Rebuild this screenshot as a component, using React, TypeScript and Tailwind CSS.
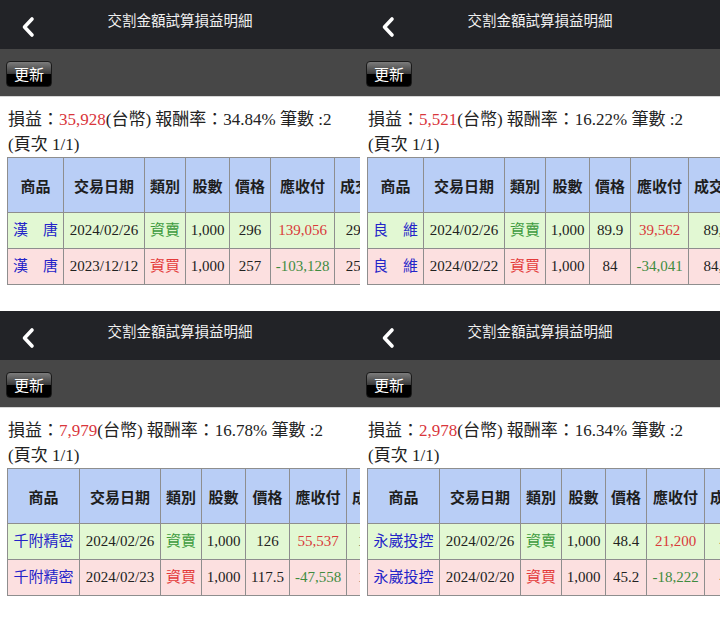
import React from "react";

type Row = {
  name: string;
  date: string;
  side: "資賣" | "資買";
  qty: string;
  price: string;
  amount: string;
  total: string;
  fee: string;
};

type Panel = {
  profit: string;
  rate: string;
  widths: string[];
  rows: Row[];
};

const PANELS: Panel[] = [
  {
    profit: "35,928",
    rate: "34.84%",
    widths: ["w-[56px]", "w-[81px]", "w-[41px]", "w-[44px]", "w-[41px]", "w-[64px]"],
    rows: [
      { name: "漢　唐", date: "2024/02/26", side: "資賣", qty: "1,000", price: "296", amount: "139,056", total: "296,000", fee: "421" },
      { name: "漢　唐", date: "2023/12/12", side: "資買", qty: "1,000", price: "257", amount: "-103,128", total: "257,000", fee: "366" },
    ],
  },
  {
    profit: "5,521",
    rate: "16.22%",
    widths: ["w-[56px]", "w-[81px]", "w-[41px]", "w-[44px]", "w-[41px]", "w-[58px]"],
    rows: [
      { name: "良　維", date: "2024/02/26", side: "資賣", qty: "1,000", price: "89.9", amount: "39,562", total: "89,900", fee: "128" },
      { name: "良　維", date: "2024/02/22", side: "資買", qty: "1,000", price: "84", amount: "-34,041", total: "84,000", fee: "119" },
    ],
  },
  {
    profit: "7,979",
    rate: "16.78%",
    widths: ["w-[72px]", "w-[81px]", "w-[41px]", "w-[44px]", "w-[44px]", "w-[57px]"],
    rows: [
      { name: "千附精密", date: "2024/02/26", side: "資賣", qty: "1,000", price: "126", amount: "55,537", total: "126,000", fee: "179" },
      { name: "千附精密", date: "2024/02/23", side: "資買", qty: "1,000", price: "117.5", amount: "-47,558", total: "117,500", fee: "167" },
    ],
  },
  {
    profit: "2,978",
    rate: "16.34%",
    widths: ["w-[72px]", "w-[81px]", "w-[41px]", "w-[44px]", "w-[41px]", "w-[58px]"],
    rows: [
      { name: "永崴投控", date: "2024/02/26", side: "資賣", qty: "1,000", price: "48.4", amount: "21,200", total: "48,400", fee: "68" },
      { name: "永崴投控", date: "2024/02/20", side: "資買", qty: "1,000", price: "45.2", amount: "-18,222", total: "45,200", fee: "64" },
    ],
  },
];

const HEADERS = ["商品", "交易日期", "類別", "股數", "價格", "應收付", "成交價金", "手續費", "交易稅"];

function BackArrow() {
  return (
    <svg width="14" height="22" viewBox="0 0 14 22" className="ml-[21px] mt-[16px] shrink-0">
      <path d="M11 3 L3.5 11 L11 19" fill="none" stroke="#ffffff" strokeWidth="3.6" strokeLinecap="round" strokeLinejoin="round" />
    </svg>
  );
}

function TradeTable({ rows, widths }: { rows: Row[]; widths: string[] }) {
  return (
    <table className="w-max border-collapse border border-[#8e8e8e] font-['Liberation_Serif','Noto_Sans_CJK_TC',serif] text-[15px] text-[#222]">
      <thead>
        <tr className="bg-[#b9cef6]">
          {HEADERS.map((h, i) => (
            <th
              key={h}
              className={`h-[55px] px-[5px] border border-[#8e8e8e] whitespace-nowrap font-['Noto_Sans_CJK_TC',sans-serif] font-bold text-[15px] text-[#1e1e1e] ${widths[i] ?? ""}`}
            >
              {h}
            </th>
          ))}
        </tr>
      </thead>
      <tbody>
        {rows.map((r, i) => {
          const sell = r.side === "資賣";
          const neg = r.amount.startsWith("-");
          return (
            <tr key={i} className={sell ? "bg-[#e2f8d3]" : "bg-[#fce0e0]"}>
              <td className="h-[36px] px-[4px] border border-[#8e8e8e] whitespace-nowrap text-center text-[#2424c8]">{r.name}</td>
              <td className="px-[4px] border border-[#8e8e8e] whitespace-nowrap text-center">{r.date}</td>
              <td className={`px-[4px] border border-[#8e8e8e] whitespace-nowrap text-center ${sell ? "text-[#3d9b3d]" : "text-[#e43a3a]"}`}>
                {r.side}
              </td>
              <td className="px-[4px] border border-[#8e8e8e] whitespace-nowrap text-center">{r.qty}</td>
              <td className="px-[4px] border border-[#8e8e8e] whitespace-nowrap text-center">{r.price}</td>
              <td className={`px-[4px] border border-[#8e8e8e] whitespace-nowrap text-center ${neg ? "text-[#3f8c3f]" : "text-[#d93a3a]"}`}>
                {r.amount}
              </td>
              <td className="px-[6px] border border-[#8e8e8e] whitespace-nowrap text-center">{r.total}</td>
              <td className="px-[6px] border border-[#8e8e8e] whitespace-nowrap text-center">{r.fee}</td>
              <td className="px-[6px] border border-[#8e8e8e] whitespace-nowrap text-center">{sell ? "444" : "0"}</td>
            </tr>
          );
        })}
      </tbody>
    </table>
  );
}

function PanelView({ panel }: { panel: Panel }) {
  return (
    <div className="flex flex-col overflow-hidden bg-white">
      {/* title bar */}
      <div className="h-[49px] shrink-0 bg-[#222327] flex items-start">
        <BackArrow />
        <div className="flex-1 text-center pt-[10px] pr-[35px] leading-[20px] text-[14.5px] text-[#f0f0f0] font-['Noto_Sans_CJK_TC',sans-serif]">
          交割金額試算損益明細
        </div>
      </div>

      {/* toolbar */}
      <div className="h-[48px] shrink-0 bg-[#474747] border-b border-[#d6d6d6] pl-[6px] pt-[12px]">
        <button className="w-[46px] h-[26px] rounded-[4px] border border-[#1a1a1a] bg-[linear-gradient(to_bottom,#7c7c7c_0%,#3a3a3a_50%,#000_50%,#000_100%)] text-white text-[15px] leading-[24px] font-['Noto_Sans_CJK_TC',sans-serif]">
          更新
        </button>
      </div>

      {/* summary */}
      <div className="px-[7px] pt-[10px] font-['Liberation_Serif','Noto_Sans_CJK_TC',serif] text-[17px] leading-[25px] text-[#222]">
        <div className="pl-[1px] whitespace-nowrap">
          損益：<span className="text-[#d9363c]">{panel.profit}</span>(台幣) 報酬率：{panel.rate} 筆數 :2
        </div>
        <div className="pl-[1px]">(頁次 1/1)</div>
        <TradeTable rows={panel.rows} widths={panel.widths} />
      </div>
    </div>
  );
}

export default function App() {
  return (
    <div className="w-[720px] h-[623px] overflow-hidden bg-white grid grid-cols-2 grid-rows-[311px_312px]">
      {PANELS.map((p, i) => (
        <PanelView key={i} panel={p} />
      ))}
    </div>
  );
}
